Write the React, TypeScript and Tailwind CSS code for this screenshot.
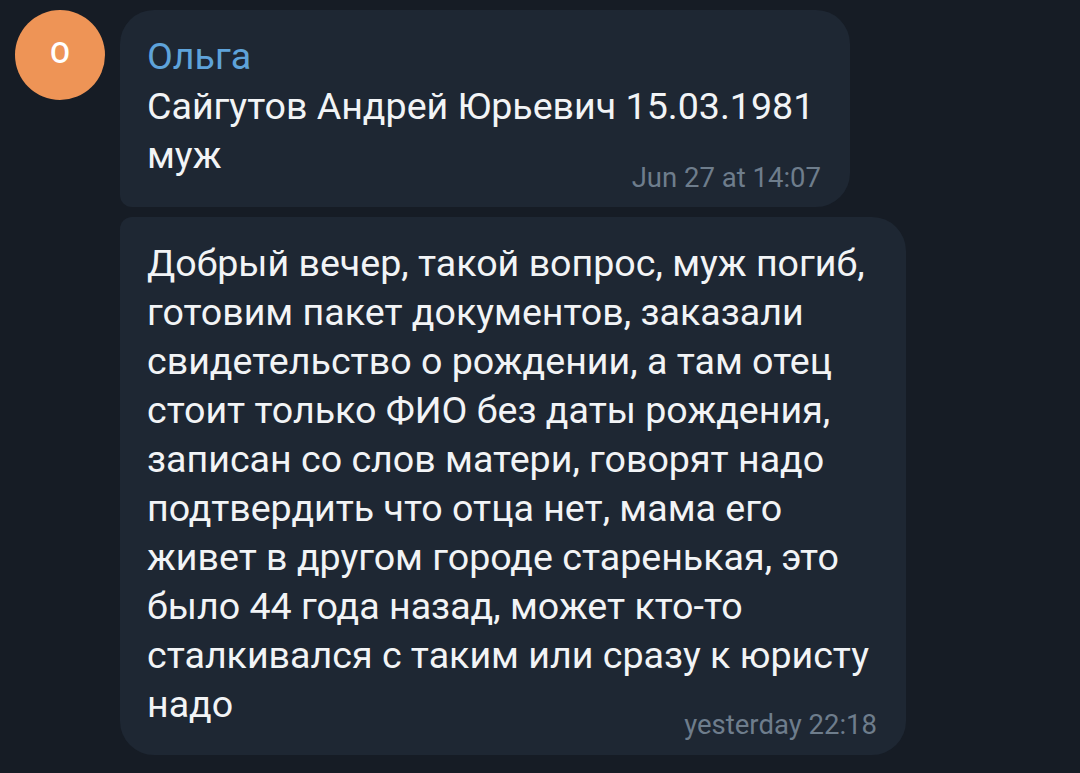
export default function App() {
  const lines = [
    "Добрый вечер, такой вопрос, муж погиб,",
    "готовим пакет документов, заказали",
    "свидетельство о рождении, а там отец",
    "стоит только ФИО без даты рождения,",
    "записан со слов матери, говорят надо",
    "подтвердить что отца нет, мама его",
    "живет в другом городе старенькая, это",
    "было 44 года назад, может кто-то",
    "сталкивался с таким или сразу к юристу",
    "надо",
  ];

  return (
    <div
      className="min-h-[773px] w-[1080px] bg-[#161c25] overflow-hidden"
      style={{ fontFamily: "Roboto, 'Noto Sans', sans-serif" }}
    >
      <div className="flex gap-[15px] pl-[15px] pt-[10px]">
        {/* avatar */}
        <div className="w-[90px] h-[90px] shrink-0 rounded-full bg-[#ee9456] flex items-center justify-center">
          <span className="text-white text-[29px] font-medium leading-none -mt-[4px]">О</span>
        </div>

        <div className="flex flex-col gap-[10px]">
          {/* first bubble */}
          <div className="w-[730px] bg-[#1e2733] rounded-t-[34px] rounded-br-[34px] rounded-bl-[12px] pl-[27px] pr-[29px] pt-[22px] pb-[14px]">
            <div className="text-[#5ea3da] text-[37.6px] leading-[48px]">Ольга</div>
            <div className="text-[#f2f4f6] text-[37.6px] leading-[49px] whitespace-nowrap pt-[2px]">
              Сайгутов Андрей Юрьевич 15.03.1981
              <br />
              муж
            </div>
            <div className="flex justify-end -mt-[17px]">
              <span className="text-[#6e7d8c] text-[27.5px] leading-[30px]">Jun 27 at 14:07</span>
            </div>
          </div>

          {/* second bubble */}
          <div className="w-[786px] bg-[#1e2733] rounded-tl-[12px] rounded-tr-[34px] rounded-b-[34px] pl-[27px] pr-[29px] pt-[22px] pb-[15px]">
            <div className="text-[#f2f4f6] text-[37.6px] leading-[49px] whitespace-nowrap">
              {lines.map((l, i) => (
                <div key={i}>{l}</div>
              ))}
            </div>
            <div className="flex justify-end -mt-[19px]">
              <span className="text-[#6e7d8c] text-[27.5px] leading-[30px]">yesterday 22:18</span>
            </div>
          </div>
        </div>
      </div>
    </div>
  );
}
